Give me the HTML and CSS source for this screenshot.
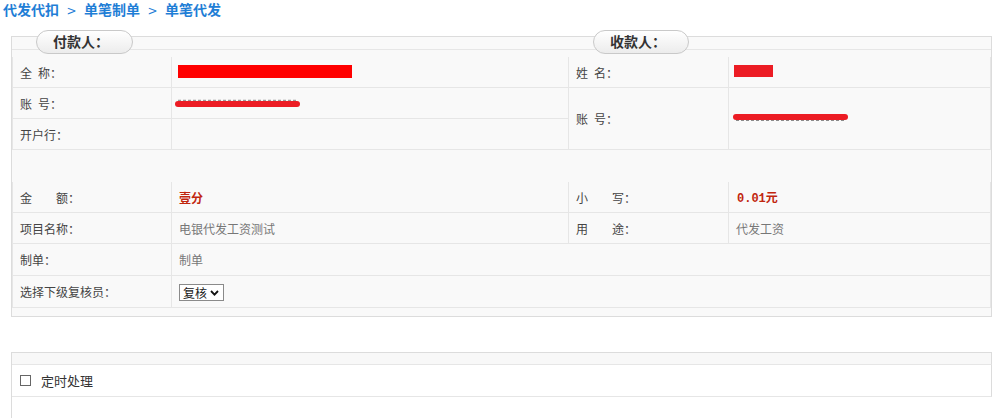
FILE: index.html
```html
<!DOCTYPE html>
<html lang="zh-CN">
<head>
<meta charset="utf-8">
<title>单笔代发</title>
<link rel="stylesheet" href="styles.css">
</head>
<body>
<div class="crumb"><a class="crumb-link">代发代扣</a><span class="sep">&gt;</span><a class="crumb-link">单笔制单</a><span class="sep">&gt;</span><a class="crumb-link">单笔代发</a></div>

<div class="panel main-panel">
  <div class="panel-head"></div>
  <div class="tab tab-payer">付款人：</div>
  <div class="tab tab-payee">收款人：</div>

  <div class="grid parties">
    <div class="cell label">全&ensp;称：</div>
    <div class="cell value"><span class="redact r-name"></span></div>
    <div class="cell label">姓&ensp;名：</div>
    <div class="cell value"><span class="redact r-pname"></span></div>

    <div class="cell label">账&ensp;号：</div>
    <div class="cell value"><svg class="scribble s-acct" width="126" height="10" viewBox="0 0 126 10"><line x1="3" y1="2.5" x2="122" y2="2.5" stroke="#9a9a9a" stroke-width="1.4" stroke-dasharray="3 2"/><rect x="0" y="3" width="125" height="6" rx="3" fill="#ec1c24"/></svg></div>
    <div class="cell label tall">账&ensp;号：</div>
    <div class="cell value tall"><svg class="scribble s-pacct" width="116" height="9" viewBox="0 0 116 9"><rect x="0" y="1" width="115" height="6" rx="3" fill="#ec1c24"/><line x1="3" y1="7.5" x2="112" y2="7.5" stroke="#8a8a8a" stroke-width="1.2" stroke-dasharray="3 2"/></svg></div>

    <div class="cell label">开户行：</div>
    <div class="cell value"></div>
  </div>

  <div class="grid details">
    <div class="cell label">金&emsp;&emsp;额：</div>
    <div class="cell value amount">壹分</div>
    <div class="cell label">小&emsp;&emsp;写：</div>
    <div class="cell value amount mono">0.01元</div>

    <div class="cell label">项目名称：</div>
    <div class="cell value">电银代发工资测试</div>
    <div class="cell label">用&emsp;&emsp;途：</div>
    <div class="cell value">代发工资</div>

    <div class="cell label row-lg">制单：</div>
    <div class="cell value wide row-lg">制单</div>

    <div class="cell label row-lg">选择下级复核员：</div>
    <div class="cell value wide row-lg">
      <span class="select-wrap">
        <select class="reviewer"><option>复核</option></select>
        <svg class="chev" width="9" height="6" viewBox="0 0 9 6"><path d="M1 1 L4.5 4.6 L8 1" fill="none" stroke="#111" stroke-width="1.8"/></svg>
      </span>
    </div>
  </div>
</div>

<div class="panel opt-panel">
  <div class="panel-head opt-head"></div>
  <div class="opt-row">
    <input type="checkbox" class="chk" id="timed">
    <label class="opt-label" for="timed">定时处理</label>
  </div>
</div>
</body>
</html>
```

FILE: styles.css
```css
* { box-sizing: border-box; }

html, body {
  margin: 0;
  padding: 0;
  background: #ffffff;
}

body {
  width: 992px;
  height: 418px;
  overflow: hidden;
  font-family: "Noto Sans CJK SC", "Noto Sans", "Liberation Sans", sans-serif;
  font-size: 12px;
  color: #444;
}

/* breadcrumb */
.crumb {
  height: 18px;
  line-height: 18px;
  padding-left: 3px;
  font-size: 14px;
  font-weight: bold;
  color: #1f7ed6;
  white-space: nowrap;
}
.crumb-link { color: #1f7ed6; }
.sep {
  display: inline-block;
  width: 25px;
  text-align: center;
  font-weight: normal;
  font-family: "DejaVu Sans", sans-serif;
  font-size: 12px;
}

/* panels */
.panel {
  position: relative;
  margin-left: 11px;
  width: 981px;
  border: 1px solid #dcdcdc;
}
.main-panel {
  margin-top: 18px;
  background: #f9f9f9;
  padding-bottom: 8px;
}
.panel-head {
  height: 13px;
  border-bottom: 1px solid #e6e6e6;
}

.tab {
  position: absolute;
  top: -7px;
  width: 97px;
  height: 24px;
  padding-left: 16px;
  line-height: 20px;
  border: 1px solid #c9c9c9;
  border-radius: 12px;
  background: linear-gradient(#ffffff, #ececec);
  font-size: 14px;
  font-weight: bold;
  color: #333;
}
.tab-payer { left: 24px; }
.tab-payee { left: 581px; width: 96px; }

/* grids */
.grid {
  display: grid;
  grid-template-columns: 159px 397px 160px 1fr;
  border-left: 1px solid #e6e6e6;
}
.parties {
  margin-top: 7px;
  grid-template-rows: 31px 31px 31px;
}
.details {
  margin-top: 32px;
  grid-template-rows: 31px 31px 32px 32px;
}

.cell {
  display: flex;
  align-items: center;
  border-right: 1px solid #e6e6e6;
  border-bottom: 1px solid #e6e6e6;
  white-space: nowrap;
}
.label {
  padding-left: 7px;
  color: #444;
}
.value {
  padding-left: 7px;
  color: #777;
}
.tall { grid-row: span 2; }
.wide { grid-column: span 3; }

.amount {
  color: #c1260e;
  font-weight: bold;
}
.mono {
  font-family: "Liberation Mono", "Noto Sans CJK SC", monospace;
  padding-left: 8px;
}

/* redaction marks */
.redact {
  display: inline-block;
  background: #ec1c24;
}
.r-name {
  width: 174px;
  height: 13px;
  margin-left: -1px;
  margin-top: -2px;
  background: #ff0000;
}
.r-pname {
  width: 39px;
  height: 12px;
  margin-left: -2px;
  margin-top: -2px;
}
.s-acct { margin-left: -4px; margin-top: 0; }
.s-pacct { margin-left: -3px; margin-top: -2px; }

/* reviewer select */
.select-wrap {
  position: relative;
  display: inline-block;
  height: 17px;
  margin-top: 1px;
}
.reviewer {
  appearance: none;
  -webkit-appearance: none;
  width: 45px;
  height: 17px;
  margin: 0;
  padding: 0 0 0 3px;
  border: 1px solid #8a8a8a;
  border-radius: 0;
  background: #fff;
  font-family: "Noto Sans CJK SC", sans-serif;
  font-size: 12px;
  line-height: 15px;
  color: #222;
}
.chev {
  position: absolute;
  right: 5px;
  top: 6px;
  pointer-events: none;
}

/* second panel */
.opt-panel {
  margin-top: 35px;
  height: 66px;
  border-right: none;
  border-bottom: none;
  background: #fff;
}
.opt-head {
  height: 12px;
  background: #f8f8f8;
  border-right: 1px solid #dcdcdc;
}
.opt-row {
  display: flex;
  align-items: center;
  height: 32px;
  padding-left: 8px;
  border-bottom: 1px solid #e6e6e6;
  border-right: 1px solid #dcdcdc;
}
.chk {
  appearance: none;
  -webkit-appearance: none;
  width: 11px;
  height: 11px;
  margin: 0 10px 0 0;
  border: 1px solid #666;
  background: #fff;
}
.opt-label {
  font-size: 13px;
  color: #333;
  letter-spacing: 0;
}
```
